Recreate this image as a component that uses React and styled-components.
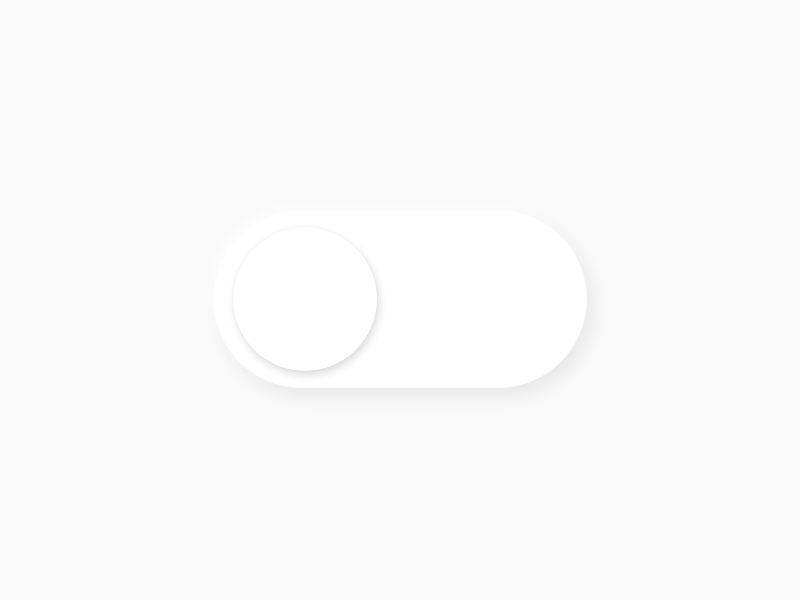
import React, { useState } from 'react';
import styled, { createGlobalStyle } from 'styled-components';

const GlobalStyle = createGlobalStyle`
  html, body, #root {
    margin: 0;
    height: 100%;
  }
  body {
    background: #f9f9f9;
    font-family: "Liberation Sans", Arial, sans-serif;
  }
`;

const Stage = styled.main`
  display: flex;
  align-items: center;
  justify-content: center;
  height: 100%;
`;

const Track = styled.button`
  display: flex;
  align-items: center;
  justify-content: ${(props) => (props.on ? 'flex-end' : 'flex-start')};
  box-sizing: border-box;
  width: 374px;
  height: 178px;
  margin-top: -2px;
  padding: 0 20px;
  border: none;
  border-radius: 89px;
  background: #ffffff;
  box-shadow: 6px 8px 18px rgba(0, 0, 0, 0.07), -3px -3px 8px rgba(255, 255, 255, 0.9),
    inset 0 0 0 1px rgba(0, 0, 0, 0.01);
  cursor: pointer;
  outline: none;
`;

const Knob = styled.span`
  display: block;
  width: 144px;
  height: 144px;
  border-radius: 50%;
  background: #ffffff;
  box-shadow: 2px 4px 8px rgba(0, 0, 0, 0.14), 0 0 2px rgba(0, 0, 0, 0.06);
`;

export default function App() {
  const [on, setOn] = useState(false);

  return (
    <>
      <GlobalStyle />
      <Stage>
        <Track on={on ? 1 : 0} aria-pressed={on} onClick={() => setOn(!on)}>
          <Knob />
        </Track>
      </Stage>
    </>
  );
}
